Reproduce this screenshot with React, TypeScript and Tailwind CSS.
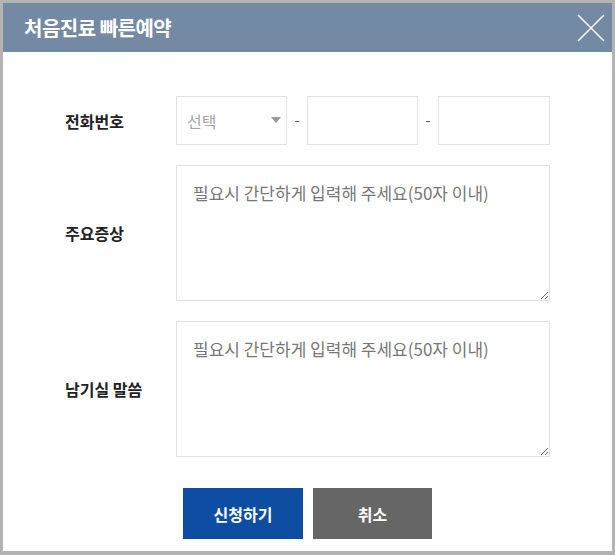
import React from 'react'

// ============================================
// QUICK RESERVATION POPUP
// Phone / symptom / memo form with two actions
// ============================================

const font = { fontFamily: '"Noto Sans CJK KR", "Noto Sans", sans-serif' }

function FieldRow({ label, children }: { label: string; children: React.ReactNode }) {
  return (
    <div className="flex items-center">
      <div className="w-[173px] shrink-0 whitespace-nowrap pl-[62px] text-[16px] font-bold text-[#222]">{label}</div>
      {children}
    </div>
  )
}

export default function App() {
  return (
    <div style={font} className="w-[615px] h-[555px] bg-[#b3b3b3] pt-[3px] px-[3px] pb-[4px]">
      <div className="flex h-full flex-col bg-white">
        {/* Header */}
        <div className="flex h-[49px] shrink-0 items-center justify-between bg-[#7489a3] pl-[21px] pr-[6px]">
          <h1 className="text-[20px] font-bold tracking-[-0.5px] text-white">처음진료 빠른예약</h1>
          <button className="flex h-[30px] w-[30px] items-center justify-center" aria-label="닫기">
            <svg width="28" height="28" viewBox="0 0 28 28" fill="none" stroke="white" strokeWidth={1.5}>
              <path d="M1 1L27 27M27 1L1 27" />
            </svg>
          </button>
        </div>

        {/* Form */}
        <div className="flex flex-col pt-[44px]">
          <FieldRow label="전화번호">
            <div className="flex items-center">
              <div className="relative">
                <select className="h-[49px] w-[111px] appearance-none border border-[#e1e1e1] bg-white pl-[10px] text-[16px] text-[#a5a5a5] outline-none">
                  <option>선택</option>
                </select>
                <span className="pointer-events-none absolute right-[6px] top-[21px] h-0 w-0 border-x-[5px] border-t-[6px] border-x-transparent border-t-[#999]" />
              </div>
              <span className="w-[20px] text-center text-[15px] text-[#555]">-</span>
              <input className="h-[49px] w-[111px] border border-[#e1e1e1] outline-none" />
              <span className="w-[20px] text-center text-[15px] text-[#555]">-</span>
              <input className="h-[49px] w-[112px] border border-[#e1e1e1] outline-none" />
            </div>
          </FieldRow>

          <div className="mt-[20px]">
            <FieldRow label="주요증상">
              <textarea
                placeholder="필요시 간단하게 입력해 주세요(50자 이내)"
                className="h-[136px] w-[374px] border border-[#e1e1e1] px-[16px] pt-[14px] text-[17px] text-[#333] outline-none placeholder:text-[#777]"
              />
            </FieldRow>
          </div>

          <div className="mt-[20px]">
            <FieldRow label="남기실 말씀">
              <textarea
                placeholder="필요시 간단하게 입력해 주세요(50자 이내)"
                className="h-[136px] w-[374px] border border-[#e1e1e1] px-[16px] pt-[14px] text-[17px] text-[#333] outline-none placeholder:text-[#777]"
              />
            </FieldRow>
          </div>

          {/* Actions */}
          <div className="mt-[31px] flex gap-[10px] pl-[180px]">
            <button className="h-[51px] w-[120px] bg-[#0d4ea2] text-[16px] font-bold text-white">신청하기</button>
            <button className="h-[51px] w-[119px] bg-[#666666] text-[16px] font-bold text-white">취소</button>
          </div>
        </div>
      </div>
    </div>
  )
}
